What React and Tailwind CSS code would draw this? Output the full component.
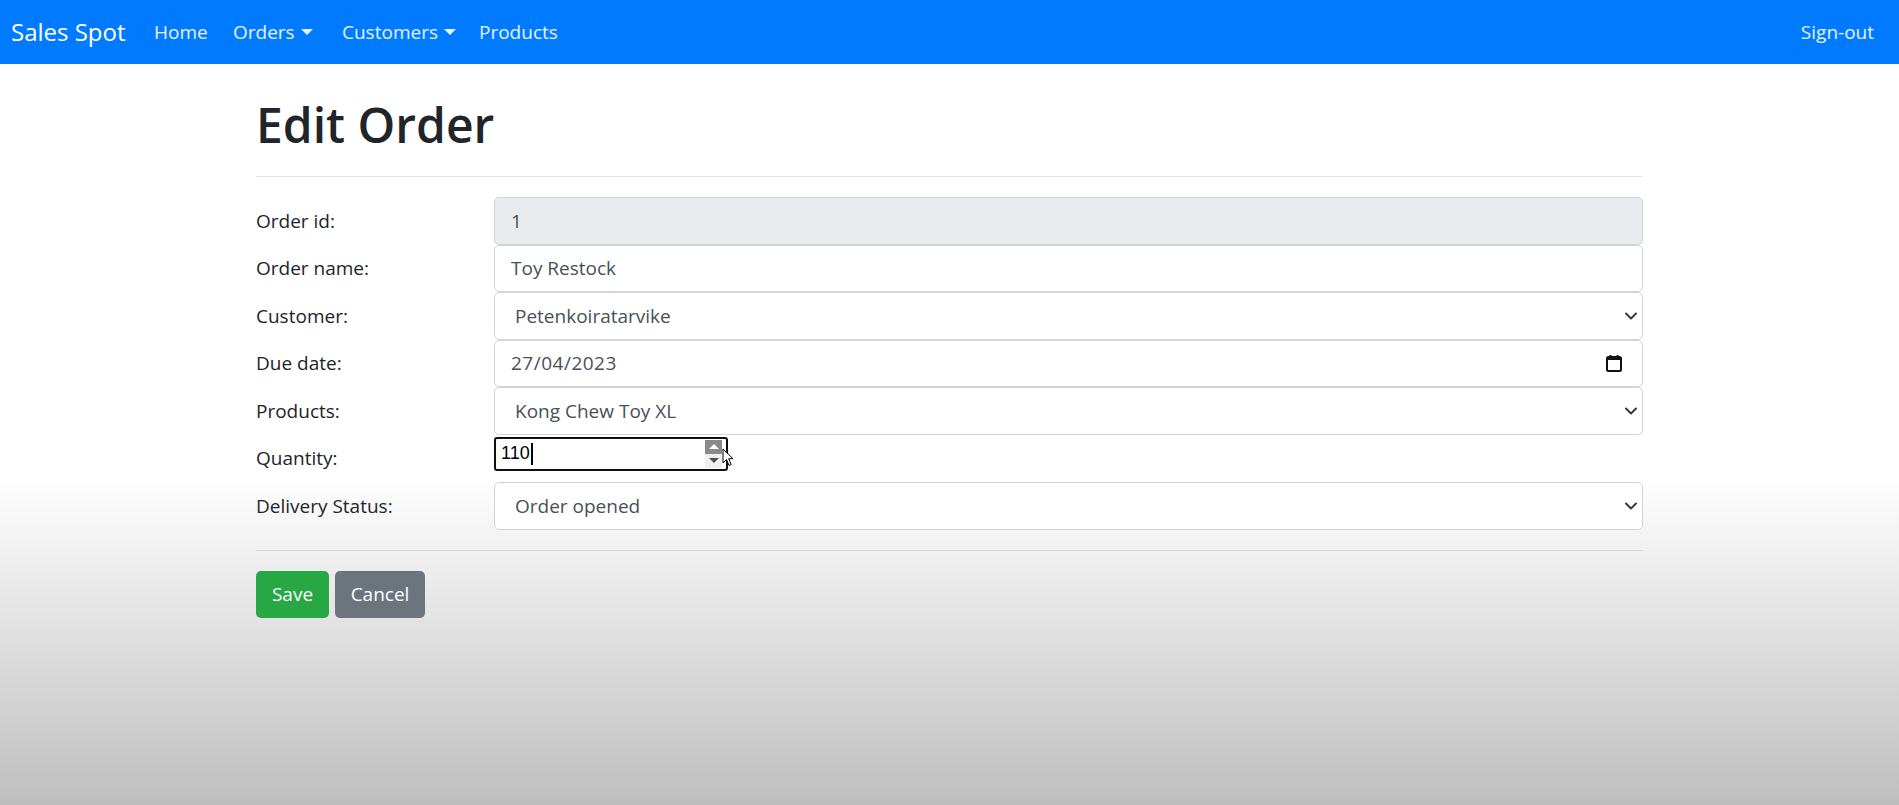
import React from 'react';

const font = { fontFamily: '"Open Sans", "Noto Sans", Arial, sans-serif' };

const Caret = () => (
  <span className="inline-block ml-[6px] align-middle w-0 h-0 border-x-[6px] border-x-transparent border-t-[6px] border-t-white/90 -mt-[4px]" />
);

const Chevron = () => (
  <svg className="absolute right-[5px] top-1/2 -translate-y-1/2" width="12" height="8" viewBox="0 0 12 8" fill="none">
    <path d="M1 1.5l5 5 5-5" stroke="#343a40" strokeWidth="2" strokeLinecap="round" strokeLinejoin="round" />
  </svg>
);

const Calendar = () => (
  <svg className="absolute right-[20px] top-1/2 -translate-y-1/2" width="16" height="18" viewBox="0 0 16 18" fill="none">
    <rect x="1" y="3" width="14" height="14" rx="1.5" stroke="#111" strokeWidth="2" />
    <rect x="1" y="3" width="14" height="3" fill="#111" />
    <path d="M4.5 1v3M11.5 1v3" stroke="#111" strokeWidth="2" />
  </svg>
);

const Row = ({ label, children }) => (
  <div className="flex items-start h-[47.5px]">
    <div className="w-[238px] h-[47.5px] flex items-center text-[19px] text-[#212529]">{label}</div>
    <div className="flex-1">{children}</div>
  </div>
);

const boxCls = 'relative h-[47.5px] w-full flex items-center border border-[#ced4da] rounded-[5px] text-[19px] text-[#495057]';

export default function App() {
  return (
    <div
      style={font}
      className="h-[805px] overflow-hidden bg-[linear-gradient(to_bottom,#ffffff_0px,#ffffff_478px,#bebebe_805px)]"
    >
      <nav className="h-[64px] bg-[#007bff] flex items-center text-white">
        <span className="ml-[11px] w-[143px] text-[24px] leading-none">Sales Spot</span>
        <div className="flex items-center text-[19px] text-white/90">
          <span className="w-[79px]">Home</span>
          <span className="w-[109px]">Orders<Caret /></span>
          <span className="w-[137px]">Customers<Caret /></span>
          <span>Products</span>
        </div>
        <span className="ml-auto mr-[25px] text-[19px] text-white/90">Sign-out</span>
      </nav>

      <div className="w-[1387px] ml-[256px]">
        <h1 className="mt-[31px] text-[48px] leading-[60px] font-semibold text-[#212529]">Edit Order</h1>
        <hr className="mt-[21px] border-t border-[#e5e5e5]" />

        <div className="mt-[20px]">
          <Row label="Order id:">
            <div className={`${boxCls} bg-[#e9ecef] pl-[16px]`}>1</div>
          </Row>
          <Row label="Order name:">
            <div className={`${boxCls} bg-white pl-[16px]`}>Toy Restock</div>
          </Row>
          <Row label="Customer:">
            <div className={`${boxCls} bg-white pl-[20px]`}>
              Petenkoiratarvike
              <Chevron />
            </div>
          </Row>
          <Row label="Due date:">
            <div className={`${boxCls} bg-white pl-[16px] tracking-[0.5px]`}>
              27/04/2023
              <Calendar />
            </div>
          </Row>
          <Row label="Products:">
            <div className={`${boxCls} bg-white pl-[20px]`}>
              Kong Chew Toy XL
              <Chevron />
            </div>
          </Row>
          <Row label="Quantity:">
            <div className="relative mt-[2px] w-[234px] h-[34px] border-2 border-[#101010] rounded-[3px] bg-white flex items-center pl-[5px]">
              <span className="text-[18px] text-black" style={{ fontFamily: '"Liberation Sans", Arial, sans-serif' }}>110</span>
              <span className="w-[2px] h-[22px] bg-black ml-[1px]" />
              <div className="absolute right-[4px] top-[1px] w-[17px] h-[28px] flex flex-col">
                <div className="h-[14px] bg-[#8a8a8a] flex items-center justify-center">
                  <span className="w-0 h-0 border-x-[5px] border-x-transparent border-b-[5px] border-b-white" />
                </div>
                <div className="h-[14px] bg-[#f0f0f0] flex items-center justify-center">
                  <span className="w-0 h-0 border-x-[5px] border-x-transparent border-t-[5px] border-t-[#505050]" />
                </div>
              </div>
              <svg className="absolute left-[226px] top-[9px]" width="12" height="19" viewBox="0 0 12 19">
                <path d="M1 1v14l3.5-3.5 2.5 6 2.2-1-2.5-5.8H11z" fill="white" stroke="black" strokeWidth="1" strokeLinejoin="round" />
              </svg>
            </div>
          </Row>
          <Row label="Delivery Status:">
            <div className={`${boxCls} bg-white pl-[20px]`}>
              Order opened
              <Chevron />
            </div>
          </Row>
        </div>

        <hr className="mt-[20px] border-t border-[#d9d9d9]" />

        <div className="mt-[20px] flex gap-[6px]">
          <button className="w-[73px] h-[47.5px] rounded-[5px] bg-[#28a745] text-white text-[19px]">Save</button>
          <button className="w-[90px] h-[47.5px] rounded-[5px] bg-[#6c757d] text-white text-[19px]">Cancel</button>
        </div>
      </div>
    </div>
  );
}
